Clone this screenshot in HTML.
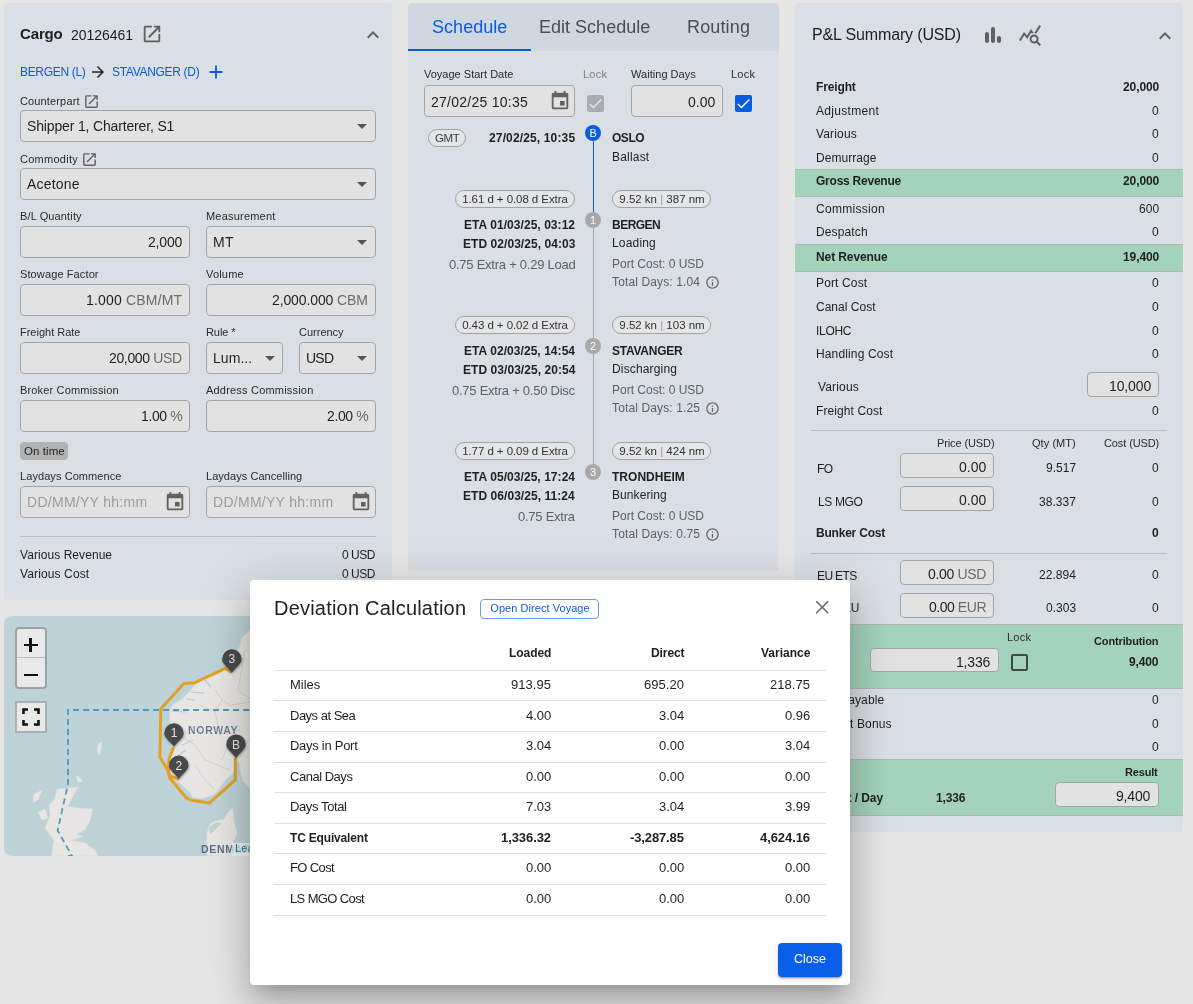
<!DOCTYPE html>
<html><head><meta charset="utf-8"><title>Voyage</title>
<style>
html,body{margin:0;padding:0;}
body{width:1193px;height:1004px;overflow:hidden;position:relative;background:#e6e6e6;font-family:"Liberation Sans", sans-serif;}
.t{position:absolute;white-space:nowrap;will-change:transform;}
.b{position:absolute;}
.i{position:absolute;display:block;will-change:transform;}
</style></head><body>
<div class="b" style="left:4px;top:3px;width:388px;height:597px;background:#dadee5;border-radius:4px;"></div>
<div class="t" style="top:26.30px;font-size:15px;line-height:15px;color:#1d1d1d;font-weight:700;letter-spacing:-0.146px;left:20.00px;">Cargo</div>
<div class="t" style="top:27.85px;font-size:14px;line-height:14px;color:#1d1d1d;letter-spacing:-0.036px;left:70.50px;">20126461</div>
<svg class="i" style="left:141px;top:23px" width="22" height="22" viewBox="0 0 24 24"><path fill="#616161" d="M19 19H5V5h7V3H5c-1.11 0-2 .9-2 2v14c0 1.1.89 2 2 2h14c1.1 0 2-.9 2-2v-7h-2v7zM14 3v2h3.59l-9.83 9.83 1.41 1.41L19 6.41V10h2V3h-7z"/></svg>
<svg class="i" style="left:361px;top:23px" width="24" height="24" viewBox="0 0 24 24"><path fill="#616161" d="M12 8l-6 6 1.41 1.41L12 10.83l4.59 4.58L18 14z"/></svg>
<div class="t" style="top:66.14px;font-size:12px;line-height:12px;color:#0a5ce0;letter-spacing:-0.318px;left:20.00px;">BERGEN (L)</div>
<svg class="i" style="left:89px;top:63px" width="18" height="18" viewBox="0 0 24 24"><path fill="#222" d="M12 4l-1.41 1.41L16.17 11H4v2h12.17l-5.58 5.59L12 20l8-8z"/></svg>
<div class="t" style="top:66.14px;font-size:12px;line-height:12px;color:#0a5ce0;letter-spacing:-0.308px;left:111.60px;">STAVANGER (D)</div>
<svg class="i" style="left:205px;top:61px" width="22" height="22" viewBox="0 0 24 24"><path fill="#0a5ce0" d="M19 13h-6v6h-2v-6H5v-2h6V5h2v6h6v2z"/></svg>
<div class="t" style="top:95.69px;font-size:11px;line-height:11px;color:#2a2a2a;letter-spacing:0.141px;left:20.00px;">Counterpart</div>
<svg class="i" style="left:83px;top:92.5px" width="17" height="17" viewBox="0 0 24 24"><path fill="#616161" d="M19 19H5V5h7V3H5c-1.11 0-2 .9-2 2v14c0 1.1.89 2 2 2h14c1.1 0 2-.9 2-2v-7h-2v7zM14 3v2h3.59l-9.83 9.83 1.41 1.41L19 6.41V10h2V3h-7z"/></svg>
<div class="b" style="left:20px;top:110px;width:356px;height:32px;background:#e2e2e2;border:1px solid #a3a6a9;border-radius:4px;box-sizing:border-box;"></div>
<div class="t" style="top:119.15px;font-size:14px;line-height:14px;color:#1f1f1f;letter-spacing:-0.156px;left:26.80px;">Shipper 1, Charterer, S1</div>
<svg class="i" style="left:350px;top:114px" width="24" height="24" viewBox="0 0 24 24"><path fill="#555" d="M7 10l5 5 5-5z"/></svg>
<div class="t" style="top:153.69px;font-size:11px;line-height:11px;color:#2a2a2a;letter-spacing:0.272px;left:20.00px;">Commodity</div>
<svg class="i" style="left:80.5px;top:150.5px" width="17" height="17" viewBox="0 0 24 24"><path fill="#616161" d="M19 19H5V5h7V3H5c-1.11 0-2 .9-2 2v14c0 1.1.89 2 2 2h14c1.1 0 2-.9 2-2v-7h-2v7zM14 3v2h3.59l-9.83 9.83 1.41 1.41L19 6.41V10h2V3h-7z"/></svg>
<div class="b" style="left:20px;top:168px;width:356px;height:32px;background:#e2e2e2;border:1px solid #a3a6a9;border-radius:4px;box-sizing:border-box;"></div>
<div class="t" style="top:176.85px;font-size:14px;line-height:14px;color:#1f1f1f;letter-spacing:0.214px;left:26.80px;">Acetone</div>
<svg class="i" style="left:350px;top:172px" width="24" height="24" viewBox="0 0 24 24"><path fill="#555" d="M7 10l5 5 5-5z"/></svg>
<div class="t" style="top:210.69px;font-size:11px;line-height:11px;color:#2a2a2a;letter-spacing:0.131px;left:20.00px;">B/L Quantity</div>
<div class="t" style="top:210.69px;font-size:11px;line-height:11px;color:#2a2a2a;letter-spacing:0.207px;left:206.00px;">Measurement</div>
<div class="b" style="left:20px;top:226px;width:170px;height:32px;background:#e2e2e2;border:1px solid #a3a6a9;border-radius:4px;box-sizing:border-box;"></div>
<div class="t" style="top:235.15px;font-size:14px;line-height:14px;color:#1f1f1f;letter-spacing:-0.168px;right:1011.00px;">2,000</div>
<div class="b" style="left:206px;top:226px;width:170px;height:32px;background:#e2e2e2;border:1px solid #a3a6a9;border-radius:4px;box-sizing:border-box;"></div>
<div class="t" style="top:235.15px;font-size:14px;line-height:14px;color:#1f1f1f;letter-spacing:0.438px;left:213.00px;">MT</div>
<svg class="i" style="left:350px;top:230px" width="24" height="24" viewBox="0 0 24 24"><path fill="#555" d="M7 10l5 5 5-5z"/></svg>
<div class="t" style="top:268.69px;font-size:11px;line-height:11px;color:#2a2a2a;letter-spacing:0.115px;left:20.00px;">Stowage Factor</div>
<div class="t" style="top:268.69px;font-size:11px;line-height:11px;color:#2a2a2a;letter-spacing:0.186px;left:206.00px;">Volume</div>
<div class="b" style="left:20px;top:284px;width:170px;height:32px;background:#e2e2e2;border:1px solid #a3a6a9;border-radius:4px;box-sizing:border-box;"></div>
<div class="t" style="top:293.15px;font-size:14px;line-height:14px;color:#1f1f1f;letter-spacing:0.178px;right:1011.00px;">1.000 <span style="color:#6b6b6b">CBM/MT</span></div>
<div class="b" style="left:206px;top:284px;width:170px;height:32px;background:#e2e2e2;border:1px solid #a3a6a9;border-radius:4px;box-sizing:border-box;"></div>
<div class="t" style="top:293.15px;font-size:14px;line-height:14px;color:#1f1f1f;letter-spacing:-0.119px;right:825.00px;">2,000.000 <span style="color:#6b6b6b">CBM</span></div>
<div class="t" style="top:326.69px;font-size:11px;line-height:11px;color:#2a2a2a;letter-spacing:-0.008px;left:20.00px;">Freight Rate</div>
<div class="t" style="top:326.69px;font-size:11px;line-height:11px;color:#2a2a2a;letter-spacing:-0.086px;left:206.00px;">Rule *</div>
<div class="t" style="top:326.69px;font-size:11px;line-height:11px;color:#2a2a2a;letter-spacing:-0.001px;left:299.00px;">Currency</div>
<div class="b" style="left:20px;top:342px;width:170px;height:32px;background:#e2e2e2;border:1px solid #a3a6a9;border-radius:4px;box-sizing:border-box;"></div>
<div class="t" style="top:351.15px;font-size:14px;line-height:14px;color:#1f1f1f;letter-spacing:-0.350px;right:1011.00px;">20,000 <span style="color:#6b6b6b">USD</span></div>
<div class="b" style="left:206px;top:342px;width:77px;height:32px;background:#e2e2e2;border:1px solid #a3a6a9;border-radius:4px;box-sizing:border-box;"></div>
<div class="t" style="top:351.15px;font-size:14px;line-height:14px;color:#1f1f1f;letter-spacing:0.060px;left:213.00px;">Lum...</div>
<svg class="i" style="left:258px;top:346px" width="24" height="24" viewBox="0 0 24 24"><path fill="#555" d="M7 10l5 5 5-5z"/></svg>
<div class="b" style="left:299px;top:342px;width:77px;height:32px;background:#e2e2e2;border:1px solid #a3a6a9;border-radius:4px;box-sizing:border-box;"></div>
<div class="t" style="top:351.15px;font-size:14px;line-height:14px;color:#1f1f1f;letter-spacing:-0.770px;left:305.50px;">USD</div>
<svg class="i" style="left:350px;top:346px" width="24" height="24" viewBox="0 0 24 24"><path fill="#555" d="M7 10l5 5 5-5z"/></svg>
<div class="t" style="top:384.69px;font-size:11px;line-height:11px;color:#2a2a2a;letter-spacing:0.165px;left:20.00px;">Broker Commission</div>
<div class="t" style="top:384.69px;font-size:11px;line-height:11px;color:#2a2a2a;letter-spacing:0.198px;left:206.00px;">Address Commission</div>
<div class="b" style="left:20px;top:400px;width:170px;height:32px;background:#e2e2e2;border:1px solid #a3a6a9;border-radius:4px;box-sizing:border-box;"></div>
<div class="t" style="top:409.15px;font-size:14px;line-height:14px;color:#1f1f1f;letter-spacing:-0.390px;right:1011.00px;">1.00 <span style="color:#6b6b6b">%</span></div>
<div class="b" style="left:206px;top:400px;width:170px;height:32px;background:#e2e2e2;border:1px solid #a3a6a9;border-radius:4px;box-sizing:border-box;"></div>
<div class="t" style="top:409.15px;font-size:14px;line-height:14px;color:#1f1f1f;letter-spacing:-0.390px;right:825.00px;">2.00 <span style="color:#6b6b6b">%</span></div>
<div class="b" style="left:20px;top:442px;width:48px;height:18px;background:#b3b3b3;border-radius:4px;"></div>
<div class="t" style="top:445.57px;font-size:11.5px;line-height:11.5px;color:#222;letter-spacing:0.069px;left:24.00px;">On time</div>
<div class="t" style="top:470.69px;font-size:11px;line-height:11px;color:#2a2a2a;letter-spacing:0.077px;left:20.00px;">Laydays Commence</div>
<div class="t" style="top:470.69px;font-size:11px;line-height:11px;color:#2a2a2a;letter-spacing:0.046px;left:206.00px;">Laydays Cancelling</div>
<div class="b" style="left:20px;top:486px;width:170px;height:32px;background:#e2e2e2;border:1px solid #a3a6a9;border-radius:4px;box-sizing:border-box;"></div>
<div class="t" style="top:494.85px;font-size:14px;line-height:14px;color:#9c9c9c;letter-spacing:0.279px;left:26.80px;">DD/MM/YY hh:mm</div>
<svg class="i" style="left:164px;top:491.2px" width="22" height="22" viewBox="0 0 24 24"><path fill="#616161" d="M17 12h-5v5h5v-5zM16 1v2H8V1H6v2H5c-1.11 0-1.99.9-1.99 2L3 19c0 1.1.89 2 2 2h14c1.1 0 2-.9 2-2V5c0-1.1-.9-2-2-2h-1V1h-2zm3 18H5V8h14v11z"/></svg>
<div class="b" style="left:206px;top:486px;width:170px;height:32px;background:#e2e2e2;border:1px solid #a3a6a9;border-radius:4px;box-sizing:border-box;"></div>
<div class="t" style="top:494.85px;font-size:14px;line-height:14px;color:#9c9c9c;letter-spacing:0.279px;left:212.80px;">DD/MM/YY hh:mm</div>
<svg class="i" style="left:350px;top:491.2px" width="22" height="22" viewBox="0 0 24 24"><path fill="#616161" d="M17 12h-5v5h5v-5zM16 1v2H8V1H6v2H5c-1.11 0-1.99.9-1.99 2L3 19c0 1.1.89 2 2 2h14c1.1 0 2-.9 2-2V5c0-1.1-.9-2-2-2h-1V1h-2zm3 18H5V8h14v11z"/></svg>
<div class="b" style="left:20px;top:536px;width:356px;height:1px;background:#b9bdc3;"></div>
<div class="t" style="top:548.84px;font-size:12px;line-height:12px;color:#1f1f1f;letter-spacing:0.063px;left:20.00px;">Various Revenue</div>
<div class="t" style="top:548.84px;font-size:12px;line-height:12px;color:#1f1f1f;letter-spacing:-0.456px;right:818.00px;">0 USD</div>
<div class="t" style="top:567.84px;font-size:12px;line-height:12px;color:#1f1f1f;letter-spacing:0.121px;left:20.00px;">Various Cost</div>
<div class="t" style="top:567.84px;font-size:12px;line-height:12px;color:#1f1f1f;letter-spacing:-0.456px;right:818.00px;">0 USD</div>
<div class="b" style="left:408px;top:3px;width:371px;height:568px;background:#dadee5;border-radius:4px;"></div>
<div class="b" style="left:408px;top:3px;width:371px;height:48px;background:#d0d7e1;border-radius:4px 4px 0 0;"></div>
<div class="b" style="left:408px;top:49px;width:123px;height:2px;background:#0a5ce0;"></div>
<div class="t" style="top:18.16px;font-size:18px;line-height:18px;color:#0a5ce0;letter-spacing:0.041px;left:431.80px;">Schedule</div>
<div class="t" style="top:18.16px;font-size:18px;line-height:18px;color:#4a4d52;letter-spacing:0.012px;left:538.60px;">Edit Schedule</div>
<div class="t" style="top:18.16px;font-size:18px;line-height:18px;color:#4a4d52;letter-spacing:0.150px;left:686.50px;">Routing</div>
<div class="t" style="top:69.49px;font-size:11px;line-height:11px;color:#2a2a2a;letter-spacing:0.008px;left:424.30px;">Voyage Start Date</div>
<div class="b" style="left:424px;top:85px;width:151px;height:32px;background:#e2e2e2;border:1px solid #a3a6a9;border-radius:4px;box-sizing:border-box;"></div>
<div class="t" style="top:94.85px;font-size:14px;line-height:14px;color:#1f1f1f;letter-spacing:0.264px;left:430.50px;">27/02/25 10:35</div>
<svg class="i" style="left:549px;top:89.5px" width="22" height="22" viewBox="0 0 24 24"><path fill="#616161" d="M17 12h-5v5h5v-5zM16 1v2H8V1H6v2H5c-1.11 0-1.99.9-1.99 2L3 19c0 1.1.89 2 2 2h14c1.1 0 2-.9 2-2V5c0-1.1-.9-2-2-2h-1V1h-2zm3 18H5V8h14v11z"/></svg>
<div class="t" style="top:69.49px;font-size:11px;line-height:11px;color:#808080;letter-spacing:0.220px;left:583.00px;">Lock</div>
<div class="b" style="left:587px;top:95px;width:17px;height:17px;background:#a9acb0;border-radius:2px;"></div>
<svg class="i" style="left:587px;top:95px" width="17" height="17" viewBox="0 0 24 24"><path fill="#e8e8e8" d="M9 16.17L4.83 12l-1.42 1.41L9 19 21 7l-1.41-1.41z"/></svg>
<div class="t" style="top:69.49px;font-size:11px;line-height:11px;color:#2a2a2a;letter-spacing:0.037px;left:631.00px;">Waiting Days</div>
<div class="b" style="left:631px;top:85px;width:92px;height:32px;background:#e2e2e2;border:1px solid #a3a6a9;border-radius:4px;box-sizing:border-box;"></div>
<div class="t" style="top:94.85px;font-size:14px;line-height:14px;color:#1f1f1f;letter-spacing:0.005px;right:478.00px;">0.00</div>
<div class="t" style="top:69.49px;font-size:11px;line-height:11px;color:#2a2a2a;letter-spacing:0.220px;left:731.40px;">Lock</div>
<div class="b" style="left:734.6px;top:95px;width:17.0px;height:17px;background:#0a5ce0;border-radius:2px;"></div>
<svg class="i" style="left:734.6px;top:95px" width="17" height="17" viewBox="0 0 24 24"><path fill="#fff" d="M9 16.17L4.83 12l-1.42 1.41L9 19 21 7l-1.41-1.41z"/></svg>
<div class="b" style="left:428px;top:129px;width:38px;height:18px;background:#e4e5e7;border:1px solid #9fa2a6;border-radius:9px;box-sizing:border-box;"></div>
<div class="t" style="top:132.77px;font-size:11.5px;line-height:11.5px;color:#3a3a3a;letter-spacing:-0.350px;left:435.00px;">GMT</div>
<div class="t" style="top:131.84px;font-size:12px;line-height:12px;color:#1f1f1f;font-weight:700;letter-spacing:0.142px;right:618.00px;">27/02/25, 10:35</div>
<div class="b" style="left:592.9px;top:141px;width:1.3000000000000682px;height:71px;background:#0a5ce0;"></div>
<div class="b" style="left:592.9px;top:228px;width:1.3000000000000682px;height:236px;background:#a8a8a8;"></div>
<div class="b" style="left:585px;top:125px;width:16px;height:16px;border-radius:50%;background:#0a5ce0;"></div>
<div class="t" style="top:127.69px;font-size:11px;line-height:11px;color:#fff;letter-spacing:-0.318px;left:393.00px;width:400px;text-align:center;">B</div>
<div class="t" style="top:131.54px;font-size:12px;line-height:12px;color:#1f1f1f;font-weight:700;letter-spacing:-0.481px;left:612.00px;">OSLO</div>
<div class="t" style="top:150.54px;font-size:12px;line-height:12px;color:#1f1f1f;letter-spacing:0.193px;left:612.00px;">Ballast</div>
<div class="b" style="left:455px;top:190px;width:120px;height:18px;background:#e4e5e7;border:1px solid #9fa2a6;border-radius:9px;box-sizing:border-box;"></div>
<div class="t" style="top:193.77px;font-size:11.5px;line-height:11.5px;color:#333;letter-spacing:-0.069px;left:315.00px;width:400px;text-align:center;">1.61 d + 0.08 d Extra</div>
<div class="b" style="left:612px;top:190px;width:99px;height:18px;background:#e4e5e7;border:1px solid #9fa2a6;border-radius:9px;box-sizing:border-box;"></div>
<div class="t" style="top:193.77px;font-size:11.5px;line-height:11.5px;color:#333;letter-spacing:-0.007px;left:461.50px;width:400px;text-align:center;">9.52 kn <span style="color:#999">|</span> 387 nm</div>
<div class="b" style="left:585px;top:212px;width:16px;height:16px;border-radius:50%;background:#a8a8a8;"></div>
<div class="t" style="top:214.69px;font-size:11px;line-height:11px;color:#fff;letter-spacing:0.059px;left:393.00px;width:400px;text-align:center;">1</div>
<div class="t" style="top:218.84px;font-size:12px;line-height:12px;color:#1f1f1f;font-weight:700;letter-spacing:0.054px;right:618.00px;">ETA 01/03/25, 03:12</div>
<div class="t" style="top:237.54px;font-size:12px;line-height:12px;color:#1f1f1f;font-weight:700;letter-spacing:0.056px;right:618.00px;">ETD 02/03/25, 04:03</div>
<div class="t" style="top:258.40px;font-size:13px;line-height:13px;color:#5e6064;letter-spacing:-0.246px;right:618.00px;">0.75 Extra + 0.29 Load</div>
<div class="t" style="top:219.24px;font-size:12px;line-height:12px;color:#1f1f1f;font-weight:700;letter-spacing:-0.521px;left:612.00px;">BERGEN</div>
<div class="t" style="top:237.04px;font-size:12px;line-height:12px;color:#1f1f1f;letter-spacing:0.174px;left:612.00px;">Loading</div>
<div class="t" style="top:258.14px;font-size:12px;line-height:12px;color:#5e6064;letter-spacing:-0.002px;left:612.00px;">Port Cost: 0 USD</div>
<div class="t" style="top:276.14px;font-size:12px;line-height:12px;color:#5e6064;letter-spacing:0.133px;left:612.00px;">Total Days: 1.04</div>
<svg class="i" style="left:705px;top:274.5px" width="15" height="15" viewBox="0 0 24 24"><path fill="#666" d="M11 7h2v2h-2zm0 4h2v6h-2zm1-9C6.48 2 2 6.48 2 12s4.48 10 10 10 10-4.48 10-10S17.52 2 12 2zm0 18c-4.41 0-8-3.59-8-8s3.59-8 8-8 8 3.59 8 8-3.59 8-8 8z"/></svg>
<div class="b" style="left:455px;top:316px;width:120px;height:18px;background:#e4e5e7;border:1px solid #9fa2a6;border-radius:9px;box-sizing:border-box;"></div>
<div class="t" style="top:319.77px;font-size:11.5px;line-height:11.5px;color:#333;letter-spacing:-0.069px;left:315.00px;width:400px;text-align:center;">0.43 d + 0.02 d Extra</div>
<div class="b" style="left:612px;top:316px;width:99px;height:18px;background:#e4e5e7;border:1px solid #9fa2a6;border-radius:9px;box-sizing:border-box;"></div>
<div class="t" style="top:319.77px;font-size:11.5px;line-height:11.5px;color:#333;letter-spacing:-0.007px;left:461.50px;width:400px;text-align:center;">9.52 kn <span style="color:#999">|</span> 103 nm</div>
<div class="b" style="left:585px;top:338px;width:16px;height:16px;border-radius:50%;background:#a8a8a8;"></div>
<div class="t" style="top:340.69px;font-size:11px;line-height:11px;color:#fff;letter-spacing:0.059px;left:393.00px;width:400px;text-align:center;">2</div>
<div class="t" style="top:344.84px;font-size:12px;line-height:12px;color:#1f1f1f;font-weight:700;letter-spacing:0.054px;right:618.00px;">ETA 02/03/25, 14:54</div>
<div class="t" style="top:363.54px;font-size:12px;line-height:12px;color:#1f1f1f;font-weight:700;letter-spacing:0.056px;right:618.00px;">ETD 03/03/25, 20:54</div>
<div class="t" style="top:384.40px;font-size:13px;line-height:13px;color:#5e6064;letter-spacing:-0.248px;right:618.00px;">0.75 Extra + 0.50 Disc</div>
<div class="t" style="top:345.24px;font-size:12px;line-height:12px;color:#1f1f1f;font-weight:700;letter-spacing:-0.255px;left:612.00px;">STAVANGER</div>
<div class="t" style="top:363.04px;font-size:12px;line-height:12px;color:#1f1f1f;letter-spacing:0.152px;left:612.00px;">Discharging</div>
<div class="t" style="top:384.14px;font-size:12px;line-height:12px;color:#5e6064;letter-spacing:-0.002px;left:612.00px;">Port Cost: 0 USD</div>
<div class="t" style="top:402.14px;font-size:12px;line-height:12px;color:#5e6064;letter-spacing:0.133px;left:612.00px;">Total Days: 1.25</div>
<svg class="i" style="left:705px;top:400.5px" width="15" height="15" viewBox="0 0 24 24"><path fill="#666" d="M11 7h2v2h-2zm0 4h2v6h-2zm1-9C6.48 2 2 6.48 2 12s4.48 10 10 10 10-4.48 10-10S17.52 2 12 2zm0 18c-4.41 0-8-3.59-8-8s3.59-8 8-8 8 3.59 8 8-3.59 8-8 8z"/></svg>
<div class="b" style="left:455px;top:442px;width:120px;height:18px;background:#e4e5e7;border:1px solid #9fa2a6;border-radius:9px;box-sizing:border-box;"></div>
<div class="t" style="top:445.77px;font-size:11.5px;line-height:11.5px;color:#333;letter-spacing:-0.069px;left:315.00px;width:400px;text-align:center;">1.77 d + 0.09 d Extra</div>
<div class="b" style="left:612px;top:442px;width:99px;height:18px;background:#e4e5e7;border:1px solid #9fa2a6;border-radius:9px;box-sizing:border-box;"></div>
<div class="t" style="top:445.77px;font-size:11.5px;line-height:11.5px;color:#333;letter-spacing:-0.007px;left:461.50px;width:400px;text-align:center;">9.52 kn <span style="color:#999">|</span> 424 nm</div>
<div class="b" style="left:585px;top:464px;width:16px;height:16px;border-radius:50%;background:#a8a8a8;"></div>
<div class="t" style="top:466.69px;font-size:11px;line-height:11px;color:#fff;letter-spacing:0.059px;left:393.00px;width:400px;text-align:center;">3</div>
<div class="t" style="top:470.84px;font-size:12px;line-height:12px;color:#1f1f1f;font-weight:700;letter-spacing:0.054px;right:618.00px;">ETA 05/03/25, 17:24</div>
<div class="t" style="top:489.54px;font-size:12px;line-height:12px;color:#1f1f1f;font-weight:700;letter-spacing:0.056px;right:618.00px;">ETD 06/03/25, 11:24</div>
<div class="t" style="top:510.40px;font-size:13px;line-height:13px;color:#5e6064;letter-spacing:-0.246px;right:618.00px;">0.75 Extra</div>
<div class="t" style="top:471.24px;font-size:12px;line-height:12px;color:#1f1f1f;font-weight:700;letter-spacing:0.022px;left:612.00px;">TRONDHEIM</div>
<div class="t" style="top:489.04px;font-size:12px;line-height:12px;color:#1f1f1f;letter-spacing:0.086px;left:612.00px;">Bunkering</div>
<div class="t" style="top:510.14px;font-size:12px;line-height:12px;color:#5e6064;letter-spacing:-0.002px;left:612.00px;">Port Cost: 0 USD</div>
<div class="t" style="top:528.14px;font-size:12px;line-height:12px;color:#5e6064;letter-spacing:0.133px;left:612.00px;">Total Days: 0.75</div>
<svg class="i" style="left:705px;top:526.5px" width="15" height="15" viewBox="0 0 24 24"><path fill="#666" d="M11 7h2v2h-2zm0 4h2v6h-2zm1-9C6.48 2 2 6.48 2 12s4.48 10 10 10 10-4.48 10-10S17.52 2 12 2zm0 18c-4.41 0-8-3.59-8-8s3.59-8 8-8 8 3.59 8 8-3.59 8-8 8z"/></svg>
<div class="b" style="left:795px;top:3px;width:388px;height:829px;background:#dadee5;border-radius:4px;"></div>
<div class="t" style="top:26.66px;font-size:16px;line-height:16px;color:#1d1d1d;letter-spacing:-0.148px;left:811.80px;">P&amp;L Summary (USD)</div>
<svg class="i" style="left:981px;top:23px" width="24" height="24" viewBox="0 0 24 24"><path fill="#616161" d="M6 20c1.1 0 2-.9 2-2v-7c0-1.1-.9-2-2-2s-2 .9-2 2v7c0 1.1.9 2 2 2zm10-5v3c0 1.1.9 2 2 2s2-.9 2-2v-3c0-1.1-.9-2-2-2s-2 .9-2 2zm-4 5c1.1 0 2-.9 2-2V6c0-1.1-.9-2-2-2s-2 .9-2 2v12c0 1.1.9 2 2 2z"/></svg>
<svg class="i" style="left:1018px;top:23px" width="24" height="24" viewBox="0 0 24 24"><path fill="#616161" d="M19.88 18.47c.44-.7.7-1.51.7-2.39 0-2.49-2.01-4.5-4.5-4.5s-4.5 2.01-4.5 4.5 2.01 4.5 4.49 4.5c.88 0 1.7-.26 2.39-.7L21.58 23 23 21.58l-3.12-3.11zm-3.8.11c-1.38 0-2.5-1.12-2.5-2.5s1.12-2.5 2.5-2.5 2.5 1.12 2.5 2.5-1.12 2.5-2.5 2.5zm-.36-8.5c-.74.02-1.45.18-2.1.45l-.55-.83-3.8 6.18-3.01-3.52-3.63 5.81L1 17l5-8 3 3.5L13 6l2.72 4.08zm2.59.5c-.64-.28-1.33-.45-2.05-.49L21.38 2 23 3.18l-4.69 7.4z"/></svg>
<svg class="i" style="left:1153px;top:24px" width="24" height="24" viewBox="0 0 24 24"><path fill="#616161" d="M12 8l-6 6 1.41 1.41L12 10.83l4.59 4.58L18 14z"/></svg>
<div class="b" style="left:795px;top:169px;width:388px;height:28px;background:#a3d3bb;border-top:1px solid #b3b7b9;border-bottom:1px solid #b3b7b9;box-sizing:border-box;"></div>
<div class="b" style="left:795px;top:244px;width:388px;height:28px;background:#a3d3bb;border-top:1px solid #b3b7b9;border-bottom:1px solid #b3b7b9;box-sizing:border-box;"></div>
<div class="t" style="top:80.84px;font-size:12px;line-height:12px;color:#1f1f1f;font-weight:700;letter-spacing:-0.140px;left:815.50px;">Freight</div>
<div class="t" style="top:80.84px;font-size:12px;line-height:12px;color:#1f1f1f;font-weight:700;letter-spacing:-0.094px;right:34.00px;">20,000</div>
<div class="t" style="top:104.84px;font-size:12px;line-height:12px;color:#1f1f1f;letter-spacing:0.310px;left:815.50px;">Adjustment</div>
<div class="t" style="top:104.84px;font-size:12px;line-height:12px;color:#1f1f1f;letter-spacing:0.064px;right:34.00px;">0</div>
<div class="t" style="top:127.84px;font-size:12px;line-height:12px;color:#1f1f1f;letter-spacing:0.159px;left:815.50px;">Various</div>
<div class="t" style="top:127.84px;font-size:12px;line-height:12px;color:#1f1f1f;letter-spacing:0.064px;right:34.00px;">0</div>
<div class="t" style="top:151.64px;font-size:12px;line-height:12px;color:#1f1f1f;letter-spacing:0.061px;left:815.50px;">Demurrage</div>
<div class="t" style="top:151.64px;font-size:12px;line-height:12px;color:#1f1f1f;letter-spacing:0.064px;right:34.00px;">0</div>
<div class="t" style="top:175.44px;font-size:12px;line-height:12px;color:#1f1f1f;font-weight:700;letter-spacing:-0.233px;left:815.50px;">Gross Revenue</div>
<div class="t" style="top:175.44px;font-size:12px;line-height:12px;color:#1f1f1f;font-weight:700;letter-spacing:-0.094px;right:34.00px;">20,000</div>
<div class="t" style="top:202.84px;font-size:12px;line-height:12px;color:#1f1f1f;letter-spacing:0.303px;left:815.50px;">Commission</div>
<div class="t" style="top:202.84px;font-size:12px;line-height:12px;color:#1f1f1f;letter-spacing:0.064px;right:34.00px;">600</div>
<div class="t" style="top:225.84px;font-size:12px;line-height:12px;color:#1f1f1f;letter-spacing:0.131px;left:815.50px;">Despatch</div>
<div class="t" style="top:225.84px;font-size:12px;line-height:12px;color:#1f1f1f;letter-spacing:0.064px;right:34.00px;">0</div>
<div class="t" style="top:250.54px;font-size:12px;line-height:12px;color:#1f1f1f;font-weight:700;letter-spacing:-0.102px;left:815.50px;">Net Revenue</div>
<div class="t" style="top:250.54px;font-size:12px;line-height:12px;color:#1f1f1f;font-weight:700;letter-spacing:-0.094px;right:34.00px;">19,400</div>
<div class="t" style="top:277.34px;font-size:12px;line-height:12px;color:#1f1f1f;letter-spacing:0.143px;left:815.50px;">Port Cost</div>
<div class="t" style="top:277.34px;font-size:12px;line-height:12px;color:#1f1f1f;letter-spacing:0.064px;right:34.00px;">0</div>
<div class="t" style="top:300.84px;font-size:12px;line-height:12px;color:#1f1f1f;letter-spacing:0.015px;left:815.50px;">Canal Cost</div>
<div class="t" style="top:300.84px;font-size:12px;line-height:12px;color:#1f1f1f;letter-spacing:0.064px;right:34.00px;">0</div>
<div class="t" style="top:324.54px;font-size:12px;line-height:12px;color:#1f1f1f;letter-spacing:-0.295px;left:815.50px;">ILOHC</div>
<div class="t" style="top:324.54px;font-size:12px;line-height:12px;color:#1f1f1f;letter-spacing:0.064px;right:34.00px;">0</div>
<div class="t" style="top:347.54px;font-size:12px;line-height:12px;color:#1f1f1f;letter-spacing:0.140px;left:815.50px;">Handling Cost</div>
<div class="t" style="top:347.54px;font-size:12px;line-height:12px;color:#1f1f1f;letter-spacing:0.064px;right:34.00px;">0</div>
<div class="t" style="top:404.84px;font-size:12px;line-height:12px;color:#1f1f1f;letter-spacing:0.096px;left:815.50px;">Freight Cost</div>
<div class="t" style="top:404.84px;font-size:12px;line-height:12px;color:#1f1f1f;letter-spacing:0.064px;right:34.00px;">0</div>
<div class="t" style="top:380.64px;font-size:12px;line-height:12px;color:#1f1f1f;letter-spacing:0.159px;left:817.70px;">Various</div>
<div class="b" style="left:1087px;top:372px;width:72px;height:25px;background:#e2e2e2;border:1px solid #a3a6a9;border-radius:4px;box-sizing:border-box;"></div>
<div class="t" style="top:378.85px;font-size:14px;line-height:14px;color:#1f1f1f;letter-spacing:-0.128px;right:42.00px;">10,000</div>
<div class="b" style="left:811px;top:430px;width:356px;height:1px;background:#b9bdc3;"></div>
<div class="t" style="top:437.69px;font-size:11px;line-height:11px;color:#2a2a2a;letter-spacing:-0.111px;right:198.60px;">Price (USD)</div>
<div class="t" style="top:437.69px;font-size:11px;line-height:11px;color:#2a2a2a;letter-spacing:0.058px;right:117.00px;">Qty (MT)</div>
<div class="t" style="top:437.69px;font-size:11px;line-height:11px;color:#2a2a2a;letter-spacing:-0.105px;right:34.00px;">Cost (USD)</div>
<div class="t" style="top:463.44px;font-size:12px;line-height:12px;color:#1f1f1f;letter-spacing:-0.705px;left:817.00px;">FO</div>
<div class="b" style="left:900px;top:453px;width:94px;height:25px;background:#e2e2e2;border:1px solid #a3a6a9;border-radius:4px;box-sizing:border-box;"></div>
<div class="t" style="top:460.35px;font-size:14px;line-height:14px;color:#1f1f1f;letter-spacing:0.005px;right:207.00px;">0.00</div>
<div class="t" style="top:462.44px;font-size:12px;line-height:12px;color:#1f1f1f;letter-spacing:0.016px;right:117.00px;">9.517</div>
<div class="t" style="top:462.44px;font-size:12px;line-height:12px;color:#1f1f1f;letter-spacing:0.064px;right:34.00px;">0</div>
<div class="t" style="top:495.54px;font-size:12px;line-height:12px;color:#1f1f1f;letter-spacing:-0.367px;left:817.70px;">LS MGO</div>
<div class="b" style="left:900px;top:486px;width:94px;height:25px;background:#e2e2e2;border:1px solid #a3a6a9;border-radius:4px;box-sizing:border-box;"></div>
<div class="t" style="top:493.35px;font-size:14px;line-height:14px;color:#1f1f1f;letter-spacing:0.005px;right:207.00px;">0.00</div>
<div class="t" style="top:495.54px;font-size:12px;line-height:12px;color:#1f1f1f;letter-spacing:0.024px;right:117.00px;">38.337</div>
<div class="t" style="top:495.54px;font-size:12px;line-height:12px;color:#1f1f1f;letter-spacing:0.064px;right:34.00px;">0</div>
<div class="t" style="top:526.64px;font-size:12px;line-height:12px;color:#1f1f1f;font-weight:700;letter-spacing:-0.210px;left:815.50px;">Bunker Cost</div>
<div class="t" style="top:526.64px;font-size:12px;line-height:12px;color:#1f1f1f;font-weight:700;letter-spacing:0.064px;right:34.00px;">0</div>
<div class="b" style="left:811px;top:553px;width:356px;height:1px;background:#b9bdc3;"></div>
<div class="t" style="top:569.64px;font-size:12px;line-height:12px;color:#1f1f1f;letter-spacing:-0.627px;left:817.00px;">EU ETS</div>
<div class="b" style="left:900px;top:560px;width:94px;height:25px;background:#e2e2e2;border:1px solid #a3a6a9;border-radius:4px;box-sizing:border-box;"></div>
<div class="t" style="top:566.85px;font-size:14px;line-height:14px;color:#1f1f1f;letter-spacing:-0.339px;right:207.00px;">0.00 <span style="color:#6b6b6b">USD</span></div>
<div class="t" style="top:569.44px;font-size:12px;line-height:12px;color:#1f1f1f;letter-spacing:0.024px;right:117.00px;">22.894</div>
<div class="t" style="top:569.44px;font-size:12px;line-height:12px;color:#1f1f1f;letter-spacing:0.064px;right:34.00px;">0</div>
<div class="t" style="top:602.44px;font-size:12px;line-height:12px;color:#1f1f1f;letter-spacing:-0.328px;right:333.70px;">FuelEU</div>
<div class="b" style="left:900px;top:593px;width:94px;height:25px;background:#e2e2e2;border:1px solid #a3a6a9;border-radius:4px;box-sizing:border-box;"></div>
<div class="t" style="top:599.85px;font-size:14px;line-height:14px;color:#1f1f1f;letter-spacing:-0.458px;right:207.00px;">0.00 <span style="color:#6b6b6b">EUR</span></div>
<div class="t" style="top:602.24px;font-size:12px;line-height:12px;color:#1f1f1f;letter-spacing:0.016px;right:117.00px;">0.303</div>
<div class="t" style="top:602.24px;font-size:12px;line-height:12px;color:#1f1f1f;letter-spacing:0.064px;right:34.00px;">0</div>
<div class="b" style="left:795px;top:624px;width:388px;height:65px;background:#a3d3bb;border-top:1px solid #b3b7b9;border-bottom:1px solid #b3b7b9;box-sizing:border-box;"></div>
<div class="t" style="top:654.84px;font-size:12px;line-height:12px;color:#1f1f1f;font-weight:700;letter-spacing:-0.257px;left:815.50px;">TCE</div>
<div class="t" style="top:631.69px;font-size:11px;line-height:11px;color:#2a2a2a;letter-spacing:0.220px;left:1007.00px;">Lock</div>
<div class="b" style="left:870px;top:648px;width:129px;height:24px;background:#e2e2e2;border:1px solid #a3a6a9;border-radius:4px;box-sizing:border-box;"></div>
<div class="t" style="top:654.85px;font-size:14px;line-height:14px;color:#1f1f1f;letter-spacing:-0.168px;right:203.00px;">1,336</div>
<div class="b" style="left:1011px;top:653.5px;width:17px;height:17.0px;border:2px solid #414846;border-radius:2px;box-sizing:border-box;"></div>
<div class="t" style="top:636.19px;font-size:11px;line-height:11px;color:#1f1f1f;font-weight:700;letter-spacing:-0.139px;right:35.00px;">Contribution</div>
<div class="t" style="top:656.24px;font-size:12px;line-height:12px;color:#1f1f1f;font-weight:700;letter-spacing:-0.125px;right:35.00px;">9,400</div>
<div class="t" style="top:694.44px;font-size:12px;line-height:12px;color:#1f1f1f;letter-spacing:0.148px;right:308.40px;">Commission Payable</div>
<div class="t" style="top:694.44px;font-size:12px;line-height:12px;color:#1f1f1f;letter-spacing:0.064px;right:34.00px;">0</div>
<div class="t" style="top:717.84px;font-size:12px;line-height:12px;color:#1f1f1f;letter-spacing:0.141px;right:301.60px;">Contract Bonus</div>
<div class="t" style="top:717.84px;font-size:12px;line-height:12px;color:#1f1f1f;letter-spacing:0.064px;right:34.00px;">0</div>
<div class="t" style="top:741.34px;font-size:12px;line-height:12px;color:#1f1f1f;letter-spacing:-0.017px;left:815.50px;">Other</div>
<div class="t" style="top:741.34px;font-size:12px;line-height:12px;color:#1f1f1f;letter-spacing:0.064px;right:34.00px;">0</div>
<div class="b" style="left:795px;top:759px;width:388px;height:57px;background:#a3d3bb;border-top:1px solid #b3b7b9;border-bottom:1px solid #b3b7b9;box-sizing:border-box;"></div>
<div class="t" style="top:766.69px;font-size:11px;line-height:11px;color:#1f1f1f;font-weight:700;letter-spacing:-0.167px;right:35.00px;">Result</div>
<div class="b" style="left:1055px;top:782px;width:104px;height:25px;background:#e2e2e2;border:1px solid #a3a6a9;border-radius:4px;box-sizing:border-box;"></div>
<div class="t" style="top:788.85px;font-size:14px;line-height:14px;color:#1f1f1f;letter-spacing:-0.168px;right:43.00px;">9,400</div>
<div class="t" style="top:792.44px;font-size:12px;line-height:12px;color:#1f1f1f;font-weight:700;letter-spacing:-0.051px;right:310.10px;">Result / Day</div>
<div class="t" style="top:792.44px;font-size:12px;line-height:12px;color:#1f1f1f;font-weight:700;letter-spacing:-0.125px;left:936.00px;">1,336</div>
<svg class="i" style="left:4px;top:616px" width="388" height="240" viewBox="4 616 388 240">
<defs><clipPath id="mc"><rect x="4" y="616" width="388" height="240" rx="8"/></clipPath>
<filter id="sh" x="-50%" y="-50%" width="200%" height="200%"><feDropShadow dx="0.5" dy="1" stdDeviation="1" flood-color="#000" flood-opacity="0.35"/></filter></defs>
<g clip-path="url(#mc)">
<rect x="4" y="616" width="388" height="240" fill="#bed3d7"/>
<polygon points="260,616 249.5,630.8 241.4,637.9 239.6,646.9 233,660 226,668 221.7,672 211,673.8 205.6,677.4 196.6,682.7 189.4,691.7 182.3,698.9 173.3,704.3 169.7,709.6 169.7,720.4 171,734 171.5,749 168,759.8 168.8,774.2 175.1,779.6 182.3,785 189.4,792.1 193,797.5 203,798.6 215.9,793.4 222.4,784.4 226.2,779.2 232.7,774 235.3,768.8 236.5,760 239.2,762.4 240.5,772 243,781 248,786 252,792 400,812 400,616" fill="#e8e6e2" stroke="#d4dcdc" stroke-width="0.8"/>
<polygon points="57,789 78.3,787 67.7,806.5 76.5,807.8 92.8,809 90.3,820 85.2,830 76.5,834 82.7,836.6 71.4,840.4 85.2,843 95.3,850.5 97.8,856 51.4,856 53.9,840 45,828 50,815 48.9,805 53.9,800" fill="#e8e6e2" stroke="#d4dcdc" stroke-width="0.8"/>
<polygon points="232.7,807.7 234.7,823.2 237.2,833.5 233.4,841.3 232.7,856 206.8,856 206.8,833.5 209.4,824.5 215.9,820.6 223.7,819.3 227.5,812.8" fill="#e8e6e2" stroke="#d4dcdc" stroke-width="0.8"/>
<polygon points="209,827 216,822.5 222,823 215,830 210,834" fill="#bed3d7"/>
<polygon points="34,794 42,790 38,800 33,803" fill="#e8e6e2"/><polygon points="38,812 45,809 48,818 42,820" fill="#e8e6e2"/><polygon points="98,744 102,742 101,750 99,756 97,750" fill="#e8e6e2"/><polygon points="76,776 81,778 83,782 78,782" fill="#e8e6e2"/>
<polyline points="215,690 222,700 230,705 252,702" fill="none" stroke="#cfcdc8" stroke-width="0.8"/><polyline points="200,705 215,712 220,735 240,730" fill="none" stroke="#cfcdc8" stroke-width="0.8"/><polyline points="180,735 195,745 205,760 230,770" fill="none" stroke="#cfcdc8" stroke-width="0.8"/><polyline points="195,765 205,780 215,790" fill="none" stroke="#cfcdc8" stroke-width="0.8"/><polyline points="222,760 228,745 252,740" fill="none" stroke="#cfcdc8" stroke-width="0.8"/><polyline points="215,712 222,700" fill="none" stroke="#cfcdc8" stroke-width="0.8"/><polyline points="245,650 238,690 252,700" fill="none" stroke="#cfcdc8" stroke-width="0.8"/>
<polyline points="204,679 211,687" fill="none" stroke="#b3cdd3" stroke-width="1.2"/><polyline points="191,692 204,693" fill="none" stroke="#b3cdd3" stroke-width="1.2"/><polyline points="186,699 195,700" fill="none" stroke="#b3cdd3" stroke-width="1.2"/><polyline points="172,711 186,712" fill="none" stroke="#b3cdd3" stroke-width="1.2"/><polyline points="182,745 193,740" fill="none" stroke="#b3cdd3" stroke-width="1.2"/><polyline points="176,757 186,750" fill="none" stroke="#b3cdd3" stroke-width="1.2"/><polyline points="237.5,764 238.5,776" fill="none" stroke="#b3cdd3" stroke-width="1.2"/>
<polyline points="68,856 72,856 57.6,830.4 68,784 68,710 400,710" fill="none" stroke="#5398bd" stroke-width="1.8" stroke-dasharray="6,4"/>
<polyline points="231.6,672.5 225.3,668.4 194.8,682.7 184,683.6 160.8,708.7 159.9,757.1 167.9,770.6 169.7,777.8 185.9,797.5 190,800 209.4,803.1 235.3,779.8 235.3,757.8" fill="none" stroke="#e2a126" stroke-width="3" stroke-linejoin="round"/>
<polyline points="173.5,747.2 172.5,750 169,759 168.4,771.6 170.4,775.8 178.8,779.3" fill="none" stroke="#e2a126" stroke-width="3" stroke-linejoin="round"/>
<text x="188" y="734" font-size="10.5" fill="#5a6e8a" font-family="Liberation Sans" font-weight="bold" letter-spacing="0.7" stroke="#e8e6e2" stroke-width="0.2">NORWAY</text>
<text x="201" y="852.5" font-size="10.5" fill="#5a6e8a" font-family="Liberation Sans" font-weight="bold" letter-spacing="0.7">DENMARK</text>
<path d="M222.20000000000002,659 a9.7,9.7 0 1,1 19.4,0 c0,5.5 -6.2,8.3 -9.7,14 c-3.5,-5.7 -9.7,-8.5 -9.7,-14z" fill="#47494b" filter="url(#sh)"/><text x="231.9" y="663.3" font-size="12" fill="#e6e6e6" text-anchor="middle" font-family="Liberation Sans">3</text><path d="M164.3,733 a9.7,9.7 0 1,1 19.4,0 c0,5.5 -6.2,8.3 -9.7,14 c-3.5,-5.7 -9.7,-8.5 -9.7,-14z" fill="#47494b" filter="url(#sh)"/><text x="174" y="737.3" font-size="12" fill="#e6e6e6" text-anchor="middle" font-family="Liberation Sans">1</text><path d="M169.10000000000002,765.3 a9.7,9.7 0 1,1 19.4,0 c0,5.5 -6.2,8.3 -9.7,14 c-3.5,-5.7 -9.7,-8.5 -9.7,-14z" fill="#47494b" filter="url(#sh)"/><text x="178.8" y="769.5999999999999" font-size="12" fill="#e6e6e6" text-anchor="middle" font-family="Liberation Sans">2</text><path d="M226.3,744.2 a9.7,9.7 0 1,1 19.4,0 c0,5.5 -6.2,8.3 -9.7,14 c-3.5,-5.7 -9.7,-8.5 -9.7,-14z" fill="#47494b" filter="url(#sh)"/><text x="236" y="748.5" font-size="12" fill="#e6e6e6" text-anchor="middle" font-family="Liberation Sans">B</text>
</g></svg>
<div class="b" style="left:232px;top:843px;width:160px;height:13px;background:rgba(255,255,255,0.7);"></div>
<div class="t" style="top:843.19px;font-size:11px;line-height:11px;color:#0078a8;letter-spacing:0.208px;left:234.60px;">Leaflet</div>
<div class="b" style="left:14.8px;top:626.8px;width:32.2px;height:62.200000000000045px;background:#e9e9e9;border:2px solid #9aa4a6;border-radius:4px;box-sizing:border-box;"></div>
<div class="b" style="left:16.8px;top:656.5px;width:28.2px;height:1.0px;background:#bbb;"></div>
<div class="b" style="left:23.5px;top:643.5px;width:14.0px;height:2.5px;background:#111;"></div>
<div class="b" style="left:29.3px;top:637.5px;width:2.5px;height:14.5px;background:#111;"></div>
<div class="b" style="left:23.5px;top:673.5px;width:14.0px;height:2.5px;background:#111;"></div>
<div class="b" style="left:14.8px;top:700.8px;width:32.2px;height:32.200000000000045px;background:#e9e9e9;border:2px solid #aab0b2;box-sizing:border-box;"></div>
<svg class="i" style="left:22px;top:708px" width="18" height="18" viewBox="0 0 18 18"><path d="M1.5 6V1.5H6M12 1.5h4.5V6M16.5 12v4.5H12M6 16.5H1.5V12" fill="none" stroke="#111" stroke-width="2.6"/></svg>
<div class="b" style="left:250px;top:580px;width:600px;height:405px;background:#fff;border-radius:4px;box-shadow:0px 11px 15px -7px rgba(0,0,0,0.2),0px 24px 38px 3px rgba(0,0,0,0.14),0px 9px 46px 8px rgba(0,0,0,0.12);"></div>
<div class="t" style="top:598.27px;font-size:20px;line-height:20px;color:#222;letter-spacing:0.210px;left:274.00px;">Deviation Calculation</div>
<div class="b" style="left:480px;top:599px;width:119px;height:20px;border:1px solid #6b9be9;border-radius:4px;box-sizing:border-box;"></div>
<div class="t" style="top:602.69px;font-size:11px;line-height:11px;color:#0a5ce0;letter-spacing:0.053px;left:339.50px;width:400px;text-align:center;">Open Direct Voyage</div>
<svg class="i" style="left:810px;top:595px" width="24" height="24" viewBox="810 595 24 24"><path d="M816.6 601.6L827.8 612.8M827.8 601.6L816.6 612.8" stroke="#6a6a6a" stroke-width="1.5" stroke-linecap="round" fill="none"/></svg>
<div class="t" style="top:646.84px;font-size:12px;line-height:12px;color:#1f1f1f;font-weight:700;letter-spacing:-0.056px;right:642.00px;">Loaded</div>
<div class="t" style="top:646.84px;font-size:12px;line-height:12px;color:#1f1f1f;font-weight:700;letter-spacing:-0.090px;right:509.00px;">Direct</div>
<div class="t" style="top:646.84px;font-size:12px;line-height:12px;color:#1f1f1f;font-weight:700;letter-spacing:-0.002px;right:383.00px;">Variance</div>
<div class="b" style="left:274px;top:670px;width:552px;height:1px;background:#e0e0e0;"></div>
<div class="t" style="top:678.00px;font-size:13px;line-height:13px;color:#1f1f1f;letter-spacing:-0.007px;left:290.00px;">Miles</div>
<div class="t" style="top:678.00px;font-size:13px;line-height:13px;color:#1f1f1f;letter-spacing:0.026px;right:642.00px;">913.95</div>
<div class="t" style="top:678.00px;font-size:13px;line-height:13px;color:#1f1f1f;letter-spacing:0.026px;right:509.00px;">695.20</div>
<div class="t" style="top:678.00px;font-size:13px;line-height:13px;color:#1f1f1f;letter-spacing:0.026px;right:383.00px;">218.75</div>
<div class="b" style="left:274px;top:700px;width:552px;height:1px;background:#e0e0e0;"></div>
<div class="t" style="top:708.58px;font-size:13px;line-height:13px;color:#1f1f1f;letter-spacing:-0.501px;left:290.00px;">Days at Sea</div>
<div class="t" style="top:708.58px;font-size:13px;line-height:13px;color:#1f1f1f;letter-spacing:0.005px;right:642.00px;">4.00</div>
<div class="t" style="top:708.58px;font-size:13px;line-height:13px;color:#1f1f1f;letter-spacing:0.005px;right:509.00px;">3.04</div>
<div class="t" style="top:708.58px;font-size:13px;line-height:13px;color:#1f1f1f;letter-spacing:0.005px;right:383.00px;">0.96</div>
<div class="b" style="left:274px;top:731px;width:552px;height:1px;background:#e0e0e0;"></div>
<div class="t" style="top:739.16px;font-size:13px;line-height:13px;color:#1f1f1f;letter-spacing:-0.275px;left:290.00px;">Days in Port</div>
<div class="t" style="top:739.16px;font-size:13px;line-height:13px;color:#1f1f1f;letter-spacing:0.005px;right:642.00px;">3.04</div>
<div class="t" style="top:739.16px;font-size:13px;line-height:13px;color:#1f1f1f;letter-spacing:0.005px;right:509.00px;">0.00</div>
<div class="t" style="top:739.16px;font-size:13px;line-height:13px;color:#1f1f1f;letter-spacing:0.005px;right:383.00px;">3.04</div>
<div class="b" style="left:274px;top:762px;width:552px;height:1px;background:#e0e0e0;"></div>
<div class="t" style="top:769.74px;font-size:13px;line-height:13px;color:#1f1f1f;letter-spacing:-0.480px;left:290.00px;">Canal Days</div>
<div class="t" style="top:769.74px;font-size:13px;line-height:13px;color:#1f1f1f;letter-spacing:0.005px;right:642.00px;">0.00</div>
<div class="t" style="top:769.74px;font-size:13px;line-height:13px;color:#1f1f1f;letter-spacing:0.005px;right:509.00px;">0.00</div>
<div class="t" style="top:769.74px;font-size:13px;line-height:13px;color:#1f1f1f;letter-spacing:0.005px;right:383.00px;">0.00</div>
<div class="b" style="left:274px;top:792px;width:552px;height:1px;background:#e0e0e0;"></div>
<div class="t" style="top:800.32px;font-size:13px;line-height:13px;color:#1f1f1f;letter-spacing:-0.383px;left:290.00px;">Days Total</div>
<div class="t" style="top:800.32px;font-size:13px;line-height:13px;color:#1f1f1f;letter-spacing:0.005px;right:642.00px;">7.03</div>
<div class="t" style="top:800.32px;font-size:13px;line-height:13px;color:#1f1f1f;letter-spacing:0.005px;right:509.00px;">3.04</div>
<div class="t" style="top:800.32px;font-size:13px;line-height:13px;color:#1f1f1f;letter-spacing:0.005px;right:383.00px;">3.99</div>
<div class="b" style="left:274px;top:823px;width:552px;height:1px;background:#e0e0e0;"></div>
<div class="t" style="top:831.74px;font-size:12px;line-height:12px;color:#1f1f1f;font-weight:700;letter-spacing:-0.178px;left:290.00px;">TC Equivalent</div>
<div class="t" style="top:830.90px;font-size:13px;line-height:13px;color:#1f1f1f;font-weight:700;letter-spacing:-0.074px;right:642.00px;">1,336.32</div>
<div class="t" style="top:830.90px;font-size:13px;line-height:13px;color:#1f1f1f;font-weight:700;letter-spacing:-0.131px;right:509.00px;">-3,287.85</div>
<div class="t" style="top:830.90px;font-size:13px;line-height:13px;color:#1f1f1f;font-weight:700;letter-spacing:-0.074px;right:383.00px;">4,624.16</div>
<div class="b" style="left:274px;top:853px;width:552px;height:1px;background:#e0e0e0;"></div>
<div class="t" style="top:861.48px;font-size:13px;line-height:13px;color:#1f1f1f;letter-spacing:-0.628px;left:290.00px;">FO Cost</div>
<div class="t" style="top:861.48px;font-size:13px;line-height:13px;color:#1f1f1f;letter-spacing:0.005px;right:642.00px;">0.00</div>
<div class="t" style="top:861.48px;font-size:13px;line-height:13px;color:#1f1f1f;letter-spacing:0.005px;right:509.00px;">0.00</div>
<div class="t" style="top:861.48px;font-size:13px;line-height:13px;color:#1f1f1f;letter-spacing:0.005px;right:383.00px;">0.00</div>
<div class="b" style="left:274px;top:884px;width:552px;height:1px;background:#e0e0e0;"></div>
<div class="t" style="top:892.06px;font-size:13px;line-height:13px;color:#1f1f1f;letter-spacing:-0.619px;left:290.00px;">LS MGO Cost</div>
<div class="t" style="top:892.06px;font-size:13px;line-height:13px;color:#1f1f1f;letter-spacing:0.005px;right:642.00px;">0.00</div>
<div class="t" style="top:892.06px;font-size:13px;line-height:13px;color:#1f1f1f;letter-spacing:0.005px;right:509.00px;">0.00</div>
<div class="t" style="top:892.06px;font-size:13px;line-height:13px;color:#1f1f1f;letter-spacing:0.005px;right:383.00px;">0.00</div>
<div class="b" style="left:274px;top:915px;width:552px;height:1px;background:#e0e0e0;"></div>
<div class="b" style="left:778px;top:943px;width:64px;height:34px;background:#0a5fe8;border-radius:4px;box-shadow:0px 3px 1px -2px rgba(0,0,0,0.2),0px 2px 2px 0px rgba(0,0,0,0.14),0px 1px 5px 0px rgba(0,0,0,0.12);"></div>
<div class="t" style="top:953.22px;font-size:12.5px;line-height:12.5px;color:#fff;letter-spacing:0.038px;left:610.00px;width:400px;text-align:center;">Close</div>
</body></html>
